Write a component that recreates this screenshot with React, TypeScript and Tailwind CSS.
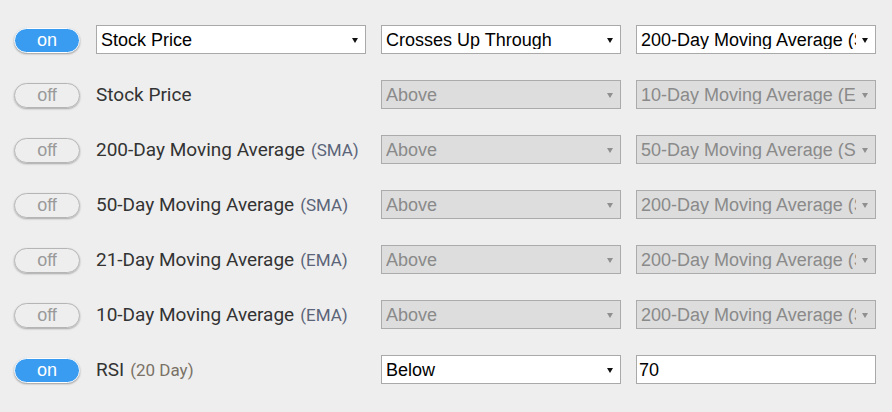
import React from 'react';

interface Row {
  id: string;
  on: boolean;
  label: string;
  suffix?: string;
  suffixColor?: string;
  condition: string;
  target: string;
  selectLabel?: boolean;
  input?: boolean;
}

const rows: Row[] = [
  { id: 'price', on: true, label: 'Stock Price', condition: 'Crosses Up Through', target: '200-Day Moving Average (SMA)', selectLabel: true },
  { id: 'price2', on: false, label: 'Stock Price', condition: 'Above', target: '10-Day Moving Average (EMA)' },
  { id: 'sma200', on: false, label: '200-Day Moving Average', suffix: '(SMA)', suffixColor: 'text-[#5b6478]', condition: 'Above', target: '50-Day Moving Average (SMA)' },
  { id: 'sma50', on: false, label: '50-Day Moving Average', suffix: '(SMA)', suffixColor: 'text-[#5b6478]', condition: 'Above', target: '200-Day Moving Average (SMA)' },
  { id: 'ema21', on: false, label: '21-Day Moving Average', suffix: '(EMA)', suffixColor: 'text-[#5b6478]', condition: 'Above', target: '200-Day Moving Average (SMA)' },
  { id: 'ema10', on: false, label: '10-Day Moving Average', suffix: '(EMA)', suffixColor: 'text-[#5b6478]', condition: 'Above', target: '200-Day Moving Average (SMA)' },
  { id: 'rsi', on: true, label: 'RSI', suffix: '(20 Day)', suffixColor: 'text-[#7a7266]', condition: 'Below', target: '70', input: true },
];

function Toggle({ on }: { on: boolean }) {
  return on ? (
    <div className="w-[66px] h-[25px] mt-[2px] shrink-0 rounded-full bg-[#3a9cf0] border border-white shadow-[0_1px_2px_rgba(0,0,0,0.35)] flex items-center justify-center text-white text-[18px] leading-none font-['Liberation_Sans',Arial,sans-serif] pb-[1px]">
      on
    </div>
  ) : (
    <div className="w-[66px] h-[25px] mt-[2px] shrink-0 rounded-full border border-[#b5b5b5] shadow-[0_1px_2px_rgba(0,0,0,0.3)] flex items-center justify-center text-[#9a9a9a] text-[18px] leading-none font-['Liberation_Sans',Arial,sans-serif] pb-[1px]">
      off
    </div>
  );
}

function Arrow({ disabled }: { disabled: boolean }) {
  return (
    <svg width="6" height="6" viewBox="0 0 6 6" className="shrink-0">
      <path d="M0 1 L6 1 L3 6 Z" fill={disabled ? '#8f8f8f' : '#111'} />
    </svg>
  );
}

function Select({ value, width, disabled }: { value: string; width: string; disabled: boolean }) {
  return (
    <div
      className={`${width} h-[29px] shrink-0 border flex items-center pl-[4px] pr-[7px] gap-[6px] font-['Liberation_Sans',Arial,sans-serif] text-[18px] ${
        disabled ? 'bg-[#dddddd] border-[#ababab] text-[#8a8a8a]' : 'bg-white border-[#a9a9a9] text-black'
      }`}
    >
      <div className="flex-1 min-w-0 overflow-hidden whitespace-nowrap leading-none">{value}</div>
      <Arrow disabled={disabled} />
    </div>
  );
}

export default function App() {
  return (
    <div className="w-[892px] h-[412px] bg-[#eeeeee] pt-[12px] pl-[14px] overflow-hidden">
      {rows.map((row) => (
        <div key={row.id} className="h-[55px] flex items-center">
          <Toggle on={row.on} />
          <div className="w-[16px] shrink-0" />
          {row.selectLabel ? (
            <Select value={row.label} width="w-[270px]" disabled={false} />
          ) : (
            <div className="w-[270px] shrink-0 whitespace-nowrap text-[#333] font-['Roboto',sans-serif] text-[19px] leading-none">
              {row.label}
              {row.suffix && (
                <span className={`ml-[6px] text-[17px] ${row.suffixColor}`}>{row.suffix}</span>
              )}
            </div>
          )}
          <div className="w-[15px] shrink-0" />
          <Select value={row.condition} width="w-[240px]" disabled={!row.on} />
          <div className="w-[15px] shrink-0" />
          {row.input ? (
            <div className="w-[240px] h-[29px] shrink-0 bg-white border border-[#a9a9a9] flex items-center pl-[2px] font-['Liberation_Sans',Arial,sans-serif] text-[18px] text-black leading-none">
              {row.target}
            </div>
          ) : (
            <Select value={row.target} width="w-[240px]" disabled={!row.on} />
          )}
        </div>
      ))}
    </div>
  );
}
